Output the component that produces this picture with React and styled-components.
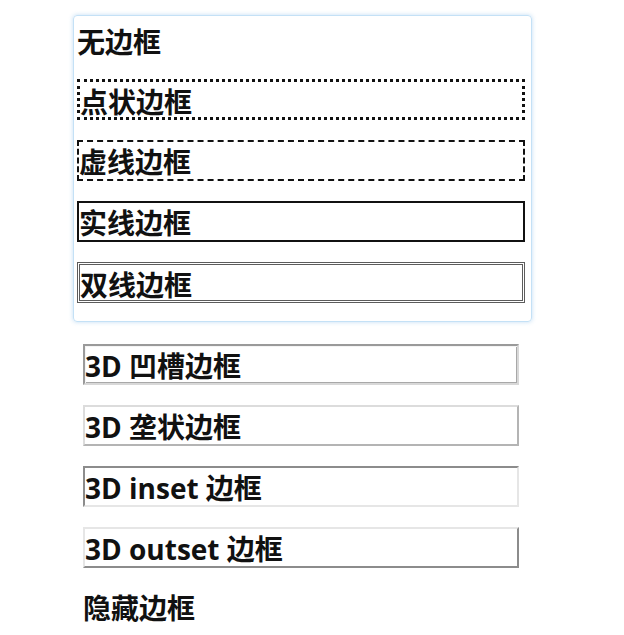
import React from "react";
import styled, { createGlobalStyle } from "styled-components";

const GlobalStyle = createGlobalStyle`
  body {
    margin: 0;
    background: #ffffff;
    font-family: "Open Sans", "Noto Sans CJK SC", sans-serif;
  }
`;

const Page = styled.div`
  padding: 15px 0 12px 73px;
  display: flex;
  flex-direction: column;
`;

const Card = styled.div`
  width: 459px;
  box-sizing: border-box;
  border: 1px solid #c4e1f6;
  border-radius: 4px;
  box-shadow: 0 0 4px rgba(120, 180, 230, 0.45);
  padding: 6px 6px 18px 3px;
  display: flex;
  flex-direction: column;
  gap: 20px;
`;

const List = styled.div`
  margin: 22px 0 0 10px;
  width: 436px;
  display: flex;
  flex-direction: column;
  gap: 20px;
`;

const borders = {
  none: "border: 0;",
  dotted: "border: 3px dotted #111;",
  dashed: "border: 2px dashed #111;",
  solid: "border: 2px solid #111;",
  double: "border: 3px double #5c5c5c;",
  groove: `
    border: 2px solid;
    border-color: #9a9a9a #d8d8d8 #d8d8d8 #9a9a9a;
    box-shadow: inset 1px 1px 0 #f4f4f4, inset -1px -1px 0 #a8a8a8;
  `,
  ridge: `
    border: 2px solid;
    border-color: #dcdcdc #b4b4b4 #b4b4b4 #dcdcdc;
  `,
  inset: `
    border: 2px solid;
    border-color: #8c8c8c #e6e6e6 #e6e6e6 #8c8c8c;
  `,
  outset: `
    border: 2px solid;
    border-color: #e6e6e6 #8c8c8c #8c8c8c #e6e6e6;
  `,
  hidden: "border: 2px hidden #000;",
};

const Box = styled.p`
  margin: 0;
  box-sizing: border-box;
  height: ${({ $kind }) => ($kind === "none" ? 37 : 41)}px;
  ${({ $kind }) => borders[$kind]}
  padding: 3px 0 0;
  font-size: 28px;
  font-weight: 700;
  color: #111;
  line-height: 34px;
  white-space: nowrap;
`;

const top = [
  ["none", "无边框"],
  ["dotted", "点状边框"],
  ["dashed", "虚线边框"],
  ["solid", "实线边框"],
  ["double", "双线边框"],
];

const bottom = [
  ["groove", "3D 凹槽边框"],
  ["ridge", "3D 垄状边框"],
  ["inset", "3D inset 边框"],
  ["outset", "3D outset 边框"],
  ["hidden", "隐藏边框"],
];

export default function App() {
  return (
    <>
      <GlobalStyle />
      <Page>
        <Card>
          {top.map(([kind, label]) => (
            <Box key={kind} $kind={kind}>
              {label}
            </Box>
          ))}
        </Card>
        <List>
          {bottom.map(([kind, label]) => (
            <Box key={kind} $kind={kind}>
              {label}
            </Box>
          ))}
        </List>
      </Page>
    </>
  );
}
